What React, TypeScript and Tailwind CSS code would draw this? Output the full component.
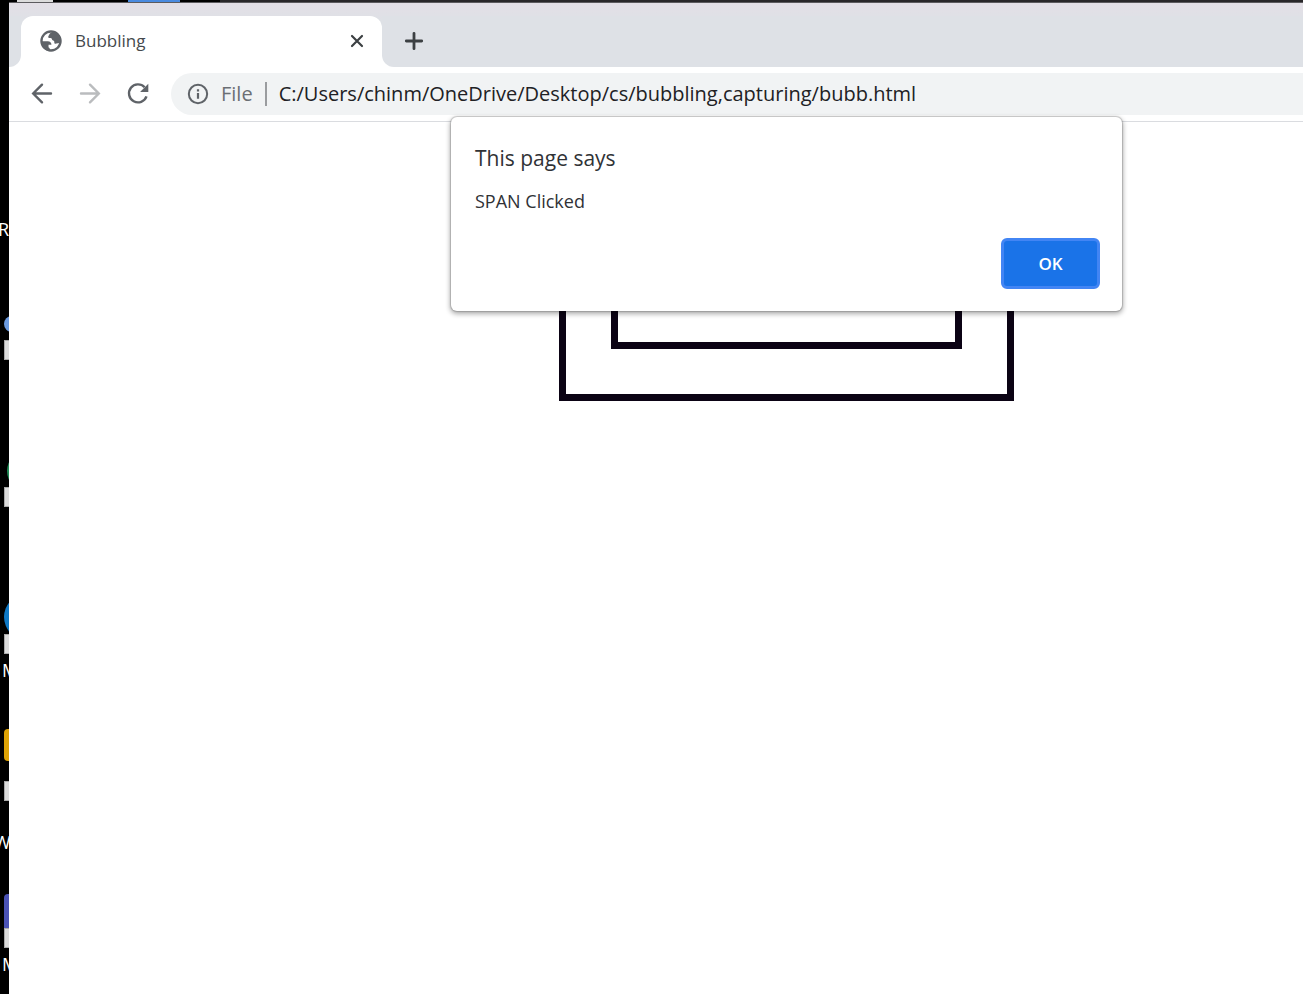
import React from "react";

const font = "font-['Open_Sans','Noto_Sans',sans-serif]";

function Globe() {
  return (
    <svg viewBox="0 0 24 24" className="size-[22px] shrink-0" aria-hidden="true">
      <circle cx="12" cy="12" r="10.4" fill="#fff" stroke="#5f6368" strokeWidth="2.6" />
      <path
        fill="#5f6368"
        d="M14 1.5c-.6 1.2-3.600 1.400-3.800 3.200-.1 1.300-1.200 1.500-1.200 2.800 0 1.200 1.500 1.300 2.600 1.300 1.600 0 1.200 2.200 2.600 2.700 1.300.4 1.600 1.300 1.400 2.300-.1.900 1.300 1.500 2.400 1 1.400-.6 2.800-.9 4.600-.6C24 8 20.500 2.500 14 1.500zM1.300 12.200h7.200c2.400 0 4 1.600 4 3.800h-3.200v2.500c0 .8 1.300.7 1.300 1.600v3C5 22.500 1.300 18 1.300 12.200z"
      />
    </svg>
  );
}

function Tab() {
  return (
    <div className="flex h-[51px] w-[361px] items-center rounded-t-xl bg-white pl-[19px] pr-[15px] pb-0.5">
      <Globe />
      <span className="ml-[13px] grow text-[17px] leading-6 text-[#45494d]">Bubbling</span>
      <button type="button" aria-label="Close tab" className="grid size-5 place-items-center">
        <svg viewBox="0 0 14 14" className="size-[14px]" fill="none" stroke="#3c4043" strokeWidth="2.200" strokeLinecap="round">
          <path d="M2 2l10 10M12 2L2 12" />
        </svg>
      </button>
    </div>
  );
}

function TabStrip() {
  return (
    <div className="flex h-16 items-end bg-linear-to-b from-[#e3dfe6] to-[#dee1e6] to-30%">
      <div className="h-[51px] w-3 bg-white">
        <div className="size-full rounded-br-xl bg-[#dee1e6]" />
      </div>
      <Tab />
      <div className="h-[51px] grow bg-white">
        <div className="flex size-full items-center rounded-bl-xl bg-[#dee1e6] pb-0.5 pl-[22px]">
          <button type="button" aria-label="New tab" className="grid size-5 place-items-center">
            <svg viewBox="0 0 20 20" className="size-5" fill="none" stroke="#3c4043" strokeWidth="2.800" strokeLinecap="round">
              <path d="M10 2.300v15.400M2.300 10h15.400" />
            </svg>
          </button>
        </div>
      </div>
    </div>
  );
}

function Toolbar() {
  return (
    <div className="flex h-[55px] items-center border-b border-[#dadce0] pl-[21px]">
      <button type="button" aria-label="Back" className="mr-6 grid size-6 place-items-center">
        <svg viewBox="0 0 24 24" className="size-6" fill="none" stroke="#5f6368" strokeWidth="2.400" strokeLinecap="round">
          <path d="M21 11.500H3.500M12 2.700L3.200 11.500l8.800 8.800" />
        </svg>
      </button>
      <button type="button" aria-label="Forward" disabled className="mr-6 grid size-6 place-items-center">
        <svg viewBox="0 0 24 24" className="size-6" fill="none" stroke="#babcbe" strokeWidth="2.400" strokeLinecap="round">
          <path d="M3 11.500h17.500M12 2.700l8.800 8.800-8.800 8.800" />
        </svg>
      </button>
      <button type="button" aria-label="Reload" className="mr-[21px] grid size-6 place-items-center">
        <svg viewBox="0 0 24 24" className="size-6">
          <path d="M20.500 14.400A9 9 0 1 1 18.600 5.200" fill="none" stroke="#5f6368" strokeWidth="2.400" />
          <path d="M22.300 1.700v8.200h-8.200z" fill="#5f6368" />
        </svg>
      </button>
      <div className="flex h-[42px] grow items-center rounded-l-full bg-[#f1f3f4] pl-4">
        <svg viewBox="0 0 24 24" className="size-[22px] shrink-0" aria-hidden="true">
          <circle cx="12" cy="12" r="10" fill="none" stroke="#5f6368" strokeWidth="2.200" />
          <path d="M10.800 10.800h2.400v6.400h-2.400zM10.800 6.700h2.400v2.500h-2.400z" fill="#5f6368" />
        </svg>
        <span className="ml-3 text-xl text-[#6b6f74]">File</span>
        <span className="mx-3 h-6 w-0.5 shrink-0 bg-[#9a9c9f]" />
        <input
          aria-label="Address"
          readOnly
          defaultValue="C:/Users/chinm/OneDrive/Desktop/cs/bubbling,capturing/bubb.html"
          className="min-w-0 grow bg-transparent text-xl text-[#202124] outline-none"
        />
      </div>
    </div>
  );
}

function AlertDialog() {
  return (
    <div
      role="alertdialog"
      aria-labelledby="alert-title"
      aria-describedby="alert-message"
      className="flex w-[671px] flex-col rounded-md bg-white pt-[27px] pr-[22px] pb-[22px] pl-6 text-[#303236] shadow-[0_0_1px_1px_rgba(0,0,0,0.16),0_2px_5px_1px_rgba(0,0,0,0.32)]"
    >
      <h1 id="alert-title" className="text-[21px] leading-7">
        This page says
      </h1>
      <p id="alert-message" className="mt-[17px] text-lg leading-6">
        SPAN Clicked
      </p>
      <button
        type="button"
        className="mt-[25px] h-[51px] w-[99px] self-end rounded-md border-3 border-[#4285f4] bg-[#1a73e8] text-[17px] font-semibold text-white"
      >
        OK
      </button>
    </div>
  );
}

function NestedBoxes() {
  return (
    <div className="mt-2 border-7 border-[#0b0314] p-[45px]">
      <div className="h-[167px] w-[351px] border-7 border-[#0b0314]" />
    </div>
  );
}

function Desktop() {
  return (
    <div className="relative w-[9px] shrink-0 overflow-hidden bg-black text-lg leading-6 text-white">
      <span className="absolute top-[217px] -left-0.5">R</span>
      <div className="absolute top-[316px] left-1 size-4 rounded-full bg-[#6c9be0]" />
      <div className="absolute top-[340px] left-1 h-5 w-5 border border-[#aaa] bg-[#dcdcdc]" />
      <div className="absolute top-[451px] left-[7px] size-10 rounded-full bg-[#1f8a55]" />
      <div className="absolute top-[487px] left-1 h-5 w-5 border border-[#aaa] bg-[#dcdcdc]" />
      <div className="absolute top-[594px] left-1 size-[46px] rounded-full bg-[#0f78c4]" />
      <div className="absolute top-[634px] left-1 h-5 w-5 border border-[#aaa] bg-[#dcdcdc]" />
      <span className="absolute top-[658px] left-0.5">M</span>
      <div className="absolute top-[729px] left-1 h-8 w-10 rounded-sm bg-[#dca206]" />
      <div className="absolute top-[781px] left-1 h-5 w-5 border border-[#aaa] bg-[#dcdcdc]" />
      <span className="absolute top-[830px] -left-1.5">W</span>
      <div className="absolute top-[894px] left-1 h-10 w-10 rounded-sm bg-[#4a52b5]" />
      <div className="absolute top-[928px] left-1 h-5 w-5 border border-[#aaa] bg-[#dcdcdc]" />
      <span className="absolute top-[952px] left-0.5">M</span>
    </div>
  );
}

export default function App() {
  return (
    <div className={`flex min-h-screen overflow-hidden bg-black ${font}`}>
      <Desktop />
      <div className="flex min-w-0 grow flex-col">
        <div className="flex h-0.5 bg-black">
          <div className="ml-2 h-full w-9 bg-[#dcdcdc]" />
          <div className="ml-[75px] h-full w-[52px] bg-[#4a8be0]" />
          <div className="ml-10 h-full grow bg-[#292729]" />
        </div>
        <div className="h-px bg-[#5c5b5e]" />
        <div className="flex grow flex-col bg-white">
          <TabStrip />
          <Toolbar />
          <main className="relative flex grow items-start justify-center pl-[261px]">
            <NestedBoxes />
            <div className="absolute inset-x-0 -top-[5px] flex justify-center pl-[261px]">
              <AlertDialog />
            </div>
          </main>
        </div>
      </div>
    </div>
  );
}
